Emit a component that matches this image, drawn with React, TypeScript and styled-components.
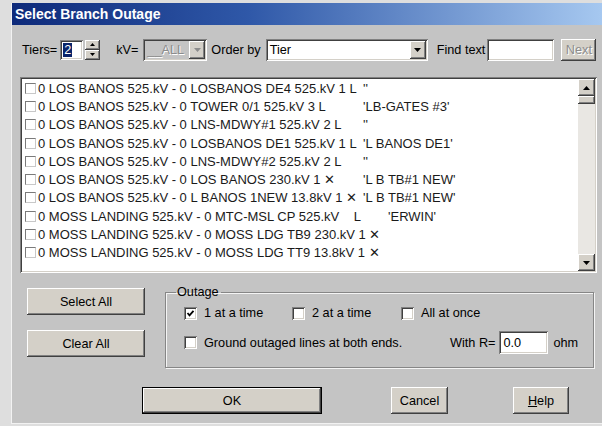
import React from 'react';
import styled, { createGlobalStyle, css } from 'styled-components';

const ui = `'Liberation Sans', Arial, sans-serif`;

const GlobalStyle = createGlobalStyle`
  html, body {
    margin: 0;
    padding: 0;
    background: #dedede;
  }
  body {
    font-family: ${ui};
  }
`;

// classic 3D bevels
const raised = css`
  background: #d4d0c8;
  box-shadow: inset -1px -1px 0 #404040, inset 1px 1px 0 #ffffff,
    inset -2px -2px 0 #808080, inset 2px 2px 0 #d4d0c8;
`;

const sunken = css`
  box-shadow: inset 1px 1px 0 #808080, inset -1px -1px 0 #ffffff,
    inset 2px 2px 0 #404040, inset -2px -2px 0 #d4d0c8;
`;

const Window = styled.div`
  box-sizing: border-box;
  margin: 3px 0 0 11px;
  width: 591px;
  height: 421px;
  background: #c4c4c4;
  border-left: 1px solid #f2f2f2;
  border-bottom: 1px solid #f2f2f2;
  display: flex;
  flex-direction: column;
  font: 12.7px ${ui};
  color: #000;
`;

const TitleBar = styled.div`
  height: 22px;
  padding-left: 3px;
  display: flex;
  align-items: center;
  background: linear-gradient(90deg, #0e2a7a 0%, #2f58a8 40%, #a6c8f0 100%);
  color: #fff;
  font-weight: bold;
  font-size: 14px;
`;

const Body = styled.div`
  flex: 1;
  padding: 13px 5px 0 8px;
  display: flex;
  flex-direction: column;
`;

const Toolbar = styled.div`
  height: 23px;
  display: flex;
  align-items: center;
`;

const Label = styled.span<{ $ml?: number }>`
  margin-left: ${({ $ml }) => $ml ?? 0}px;
  white-space: nowrap;
`;

const SpinField = styled.div`
  box-sizing: border-box;
  margin-left: 3px;
  width: 23px;
  height: 20px;
  padding: 3px 0 0 3px;
  background: #fff;
  ${sunken};
`;

const Selected = styled.span`
  background: #0a246a;
  color: #fff;
  padding: 0 1px;
`;

const Spinner = styled.div`
  margin-left: 2px;
  width: 15px;
  height: 20px;
  display: flex;
  flex-direction: column;
`;

const SpinButton = styled.div`
  flex: 1;
  display: flex;
  align-items: center;
  justify-content: center;
  ${raised};
`;

const Combo = styled.div<{ $w: number; $ml: number; $disabled?: boolean }>`
  box-sizing: border-box;
  margin-left: ${({ $ml }) => $ml}px;
  width: ${({ $w }) => $w}px;
  height: 22px;
  padding: 2px;
  display: flex;
  align-items: stretch;
  background: ${({ $disabled }) => ($disabled ? '#c4c4c4' : '#fff')};
  ${sunken};
`;

const ComboText = styled.span<{ $disabled?: boolean }>`
  flex: 1;
  padding-left: 2px;
  display: flex;
  align-items: center;
  color: ${({ $disabled }) => ($disabled ? '#8c8c8c' : '#000')};
  text-shadow: ${({ $disabled }) => ($disabled ? '1px 1px 0 #fff' : 'none')};
`;

const DropButton = styled.div`
  width: 16px;
  display: flex;
  align-items: center;
  justify-content: center;
  ${raised};
`;

const TextInput = styled.div<{ $w: number; $ml: number; $h?: number }>`
  box-sizing: border-box;
  margin-left: ${({ $ml }) => $ml}px;
  width: ${({ $w }) => $w}px;
  height: ${({ $h }) => $h ?? 22}px;
  padding: 0 4px;
  display: flex;
  align-items: center;
  background: #fff;
  ${sunken};
`;

const Button = styled.button<{ $w: number; $h?: number; $ml?: number; $default?: boolean; $disabled?: boolean }>`
  box-sizing: border-box;
  margin: 0 0 0 ${({ $ml }) => $ml ?? 0}px;
  width: ${({ $w }) => $w}px;
  height: ${({ $h }) => $h ?? 27}px;
  padding: 0;
  font: inherit;
  color: ${({ $disabled }) => ($disabled ? '#8c8c8c' : '#000')};
  text-shadow: ${({ $disabled }) => ($disabled ? '1px 1px 0 #fff' : 'none')};
  border: ${({ $default }) => ($default ? '1px solid #000' : 'none')};
  ${raised};
`;

const ListBox = styled.div`
  box-sizing: border-box;
  margin-top: 16px;
  height: 196px;
  padding: 2px;
  display: flex;
  background: #fff;
  ${sunken};
`;

const Rows = styled.div`
  flex: 1;
  padding-left: 3px;
  overflow: hidden;
`;

const Row = styled.div`
  height: 18.3px;
  display: flex;
  align-items: center;
  font-size: 13px;
  color: #1a1a1a;
  white-space: pre;
`;

const RowBox = styled.span`
  box-sizing: border-box;
  width: 11px;
  height: 11px;
  margin-right: 2px;
  border: 1px solid;
  border-color: #7a7a7a #c8c8c8 #c8c8c8 #7a7a7a;
  background: #fff;
  flex: none;
`;

// a fixed column puts the note on its tab stop; without one it follows the text
const RowText = styled.span<{ $w?: number }>`
  flex: none;
  width: ${({ $w }) => ($w ? `${$w}px` : 'auto')};
  margin-right: ${({ $w }) => ($w ? 0 : 6)}px;
`;

const ScrollBar = styled.div`
  width: 17px;
  display: flex;
  flex-direction: column;
  background: #e9e7e3;
`;

const ScrollButton = styled.div<{ $h: number }>`
  height: ${({ $h }) => $h}px;
  display: flex;
  align-items: center;
  justify-content: center;
  ${raised};
`;

const Track = styled.div`
  flex: 1;
`;

const Lower = styled.div`
  margin-top: 12px;
  display: flex;
  align-items: flex-start;
`;

const SideButtons = styled.div`
  margin: 3px 0 0 7px;
  display: flex;
  flex-direction: column;
  gap: 15px;
`;

const Group = styled.fieldset`
  box-sizing: border-box;
  margin: 0 0 0 20px;
  width: 429px;
  height: 83px;
  padding: 0 0 0 18px;
  border: 1px solid #868686;
  box-shadow: inset 1px 1px 0 #f4f4f4, 1px 1px 0 #f4f4f4;
`;

const Legend = styled.legend`
  margin-left: -8px;
  padding: 0 2px 0 1px;
  font-size: 12.7px;
`;

const OptionRow = styled.div<{ $cols: string; $mt: number }>`
  margin-top: ${({ $mt }) => $mt}px;
  display: grid;
  grid-template-columns: ${({ $cols }) => $cols};
  align-items: center;
`;

const Option = styled.label`
  display: flex;
  align-items: center;
  gap: 7px;
  white-space: nowrap;
`;

const CheckBox = styled.span`
  box-sizing: border-box;
  width: 13px;
  height: 13px;
  display: flex;
  align-items: center;
  justify-content: center;
  background: #fff;
  ${sunken};
`;

const Resistance = styled.div`
  display: flex;
  align-items: center;
`;

const Footer = styled.div`
  margin: 19px 0 0 122px;
  display: flex;
`;

const Underline = styled.span`
  text-decoration: underline;
`;

function Arrow({ dir = 'down', color = '#000', w = 7 }: { dir?: 'up' | 'down'; color?: string; w?: number }) {
  const h = Math.ceil(w / 2);
  const pts = dir === 'down' ? `0,0 ${w},0 ${w / 2},${h}` : `0,${h} ${w},${h} ${w / 2},0`;
  return (
    <svg width={w} height={h} viewBox={`0 0 ${w} ${h}`}>
      <polygon points={pts} fill={color} />
    </svg>
  );
}

function Check({ checked, label }: { checked?: boolean; label: string }) {
  return (
    <Option>
      <CheckBox>
        {checked && (
          <svg width="9" height="9" viewBox="0 0 9 9">
            <polyline points="1.5,4 3.5,6.3 7.5,1.8" fill="none" stroke="#000" strokeWidth="1.8" />
          </svg>
        )}
      </CheckBox>
      {label}
    </Option>
  );
}

type Branch = { text: string; note?: string; col?: number };

const branches: Branch[] = [
  { text: '0 LOS BANOS 525.kV - 0 LOSBANOS DE4 525.kV 1 L', note: "''", col: 325 },
  { text: '0 LOS BANOS 525.kV - 0 TOWER 0/1 525.kV 3 L', note: "'LB-GATES #3'", col: 325 },
  { text: '0 LOS BANOS 525.kV - 0 LNS-MDWY#1 525.kV 2 L', note: "''", col: 325 },
  { text: '0 LOS BANOS 525.kV - 0 LOSBANOS DE1 525.kV 1 L', note: "'L BANOS DE1'", col: 325 },
  { text: '0 LOS BANOS 525.kV - 0 LNS-MDWY#2 525.kV 2 L', note: "''", col: 325 },
  { text: '0 LOS BANOS 525.kV - 0 LOS BANOS 230.kV 1 \u2715', note: "'L B TB#1 NEW'", col: 325 },
  { text: '0 LOS BANOS 525.kV - 0 L BANOS 1NEW 13.8kV 1 \u2715', note: "'L B TB#1 NEW'" },
  { text: '0 MOSS LANDING 525.kV - 0 MTC-MSL CP 525.kV    L', note: "'ERWIN'", col: 350 },
  { text: '0 MOSS LANDING 525.kV - 0 MOSS LDG TB9 230.kV 1 \u2715' },
  { text: '0 MOSS LANDING 525.kV - 0 MOSS LDG TT9 13.8kV 1 \u2715' },
];

export default function App() {
  return (
    <>
      <GlobalStyle />
      <Window>
        <TitleBar>Select Branch Outage</TitleBar>
        <Body>
          <Toolbar>
            <Label $ml={2}>Tiers=</Label>
            <SpinField>
              <Selected>2</Selected>
            </SpinField>
            <Spinner>
              <SpinButton>
                <Arrow dir="up" w={5} />
              </SpinButton>
              <SpinButton>
                <Arrow w={5} />
              </SpinButton>
            </Spinner>
            <Label $ml={16}>kV=</Label>
            <Combo $w={64} $ml={5} $disabled>
              <ComboText $disabled>__ALL</ComboText>
              <DropButton>
                <Arrow color="#8c8c8c" />
              </DropButton>
            </Combo>
            <Label $ml={4}>Order by</Label>
            <Combo $w={162} $ml={5}>
              <ComboText>Tier</ComboText>
              <DropButton>
                <Arrow />
              </DropButton>
            </Combo>
            <Label $ml={9}>Find text</Label>
            <TextInput $w={67} $ml={2} />
            <Button $w={35} $h={22} $ml={7} $disabled>
              Next
            </Button>
          </Toolbar>

          <ListBox>
            <Rows>
              {branches.map((b, i) => (
                <Row key={i}>
                  <RowBox />
                  <RowText $w={b.col}>{b.text}</RowText>
                  {b.note && <span>{b.note}</span>}
                </Row>
              ))}
            </Rows>
            <ScrollBar>
              <ScrollButton $h={17}>
                <Arrow dir="up" />
              </ScrollButton>
              <ScrollButton $h={8} />
              <Track />
              <ScrollButton $h={17}>
                <Arrow />
              </ScrollButton>
            </ScrollBar>
          </ListBox>

          <Lower>
            <SideButtons>
              <Button $w={118}>Select All</Button>
              <Button $w={118}>Clear All</Button>
            </SideButtons>
            <Group>
              <Legend>Outage</Legend>
              <OptionRow $cols="108px 109px auto" $mt={7}>
                <Check checked label="1 at a time" />
                <Check label="2 at a time" />
                <Check label="All at once" />
              </OptionRow>
              <OptionRow $cols="266px auto" $mt={11}>
                <Check label="Ground outaged lines at both ends." />
                <Resistance>
                  With R=
                  <TextInput $w={49} $ml={4} $h={23}>
                    0.0
                  </TextInput>
                  <Label $ml={5}>ohm</Label>
                </Resistance>
              </OptionRow>
            </Group>
          </Lower>

          <Footer>
            <Button $w={180} $default>
              OK
            </Button>
            <Button $w={57} $ml={69}>
              Cancel
            </Button>
            <Button $w={56} $ml={65}>
              <Underline>H</Underline>elp
            </Button>
          </Footer>
        </Body>
      </Window>
    </>
  );
}
